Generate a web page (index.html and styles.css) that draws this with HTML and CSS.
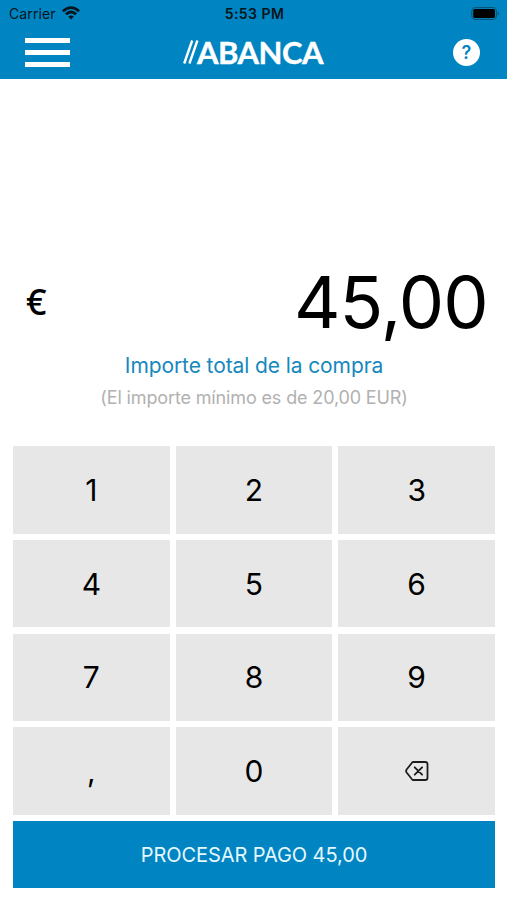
FILE: index.html
```html
<!DOCTYPE html>
<html lang="es">
<head>
<meta charset="utf-8">
<title>ABANCA</title>
<link rel="stylesheet" href="styles.css">
</head>
<body>
<header class="header">
  <div class="status">
    <div class="carrier"><span>Carrier</span>
      <svg class="wifi" width="18" height="14" viewBox="0 0 18 14" fill="none" stroke="#07151d" stroke-width="2.7"><path d="M.9 5.2Q9-2 17.1 5.2M3.9 8.3Q9 3.7 14.1 8.3"/><path d="M6.2 10.6Q9 8.2 11.8 10.6L9 13.5Z" fill="#07151d" stroke="none"/></svg>
    </div>
    <time class="time">5:53 PM</time>
    <svg class="battery" width="30" height="13" viewBox="0 0 30 13"><rect x="1.8" y=".6" width="24.6" height="11.8" rx="3.2" fill="none" stroke="#07506f"/><rect x="3.2" y="2" width="21.8" height="9" rx="1.8"/><path d="M27.8 4.5q2.6 2 0 4z" fill="#07506f"/></svg>
  </div>
  <nav class="nav">
    <button class="menu" aria-label="Menú"><i></i><i></i><i></i></button>
    <div class="brand"><svg width="16" height="24" viewBox="0 0 16 24" stroke="#fff" stroke-width="2.4"><path d="M1.2 23.5 9.2.5M6.4 23.5 14.4.5"/></svg><span>ABANCA</span></div>
    <button class="help">?</button>
  </nav>
</header>
<main class="main">
  <div class="amount"><span class="currency">€</span><span class="value">45,00</span></div>
  <p class="label">Importe total de la compra</p>
  <p class="note">(El importe mínimo es de 20,00 EUR)</p>
  <div class="keys">
    <button>1</button><button>2</button><button>3</button>
    <button>4</button><button>5</button><button>6</button>
    <button>7</button><button>8</button><button>9</button>
    <button>,</button><button>0</button>
    <button aria-label="Borrar"><svg class="erase" width="24" height="20" viewBox="0 0 24 20" fill="none" stroke="#1c1c1c" stroke-width="1.8" stroke-linejoin="round" stroke-linecap="round"><path d="M8.3 1H20.2Q22.5 1 22.5 3.3V16.7Q22.5 19 20.2 19H8.3Q7.6 19 7 18.3L1.6 11.5Q.6 10 1.6 8.5L7 1.7Q7.6 1 8.3 1Z"/><path d="m9.7 6.3 7.4 7.4m0-7.4-7.4 7.4"/></svg></button>
  </div>
  <button class="pay">PROCESAR PAGO 45,00</button>
</main>
</body>
</html>
```
FILE: styles.css
```css
* { box-sizing: border-box; }
body { margin: 0; height: 900px; overflow: hidden; background: #fff; color: #000; font-family: Inter, "Liberation Sans", sans-serif; }
button { margin: 0; padding: 0; border: 0; background: none; color: inherit; font: inherit; }
svg { display: block; }
p { margin: 0; }
.header { height: 79px; background: #0085c2; }
.status { height: 27px; padding: 0 7px 0 9px; display: grid; grid-template-columns: 1fr auto 1fr; align-items: center; font-size: 14px; color: #07151d; }
.carrier { display: flex; align-items: center; gap: 6px; letter-spacing: .1px; }
.wifi { margin-top: -2px; }
.time { font-weight: 600; letter-spacing: .45px; }
.battery { justify-self: end; }
.nav { height: 50px; padding: 0 27px 0 25px; display: grid; grid-template-columns: 1fr auto 1fr; align-items: center; }
.menu { width: 45px; display: flex; flex-direction: column; gap: 7px; }
.menu i { height: 5px; background: #fff; }
.brand { margin: -1px 0 0 1px; display: flex; align-items: center; color: #fff; font: 700 31px/30px Lato, sans-serif; }
.brand span { margin-left: -2px; letter-spacing: -.5px; -webkit-text-stroke: .4px #fff; }
.help { justify-self: end; width: 27px; height: 27px; border-radius: 50%; background: #fff; color: #0085c2; font-size: 18px; font-weight: 600; line-height: 27px; }
.main { padding: 178px 12px 0 13px; display: flex; flex-direction: column; }
.amount { height: 90px; padding: 0 7px 0 13px; display: flex; justify-content: space-between; align-items: center; }
.currency { font: 500 36px/40px "Noto Sans", sans-serif; }
.value { font-size: 72px; line-height: 86px; letter-spacing: -.8px; }
.label { margin-top: 3px; height: 32px; line-height: 32px; text-align: center; font-size: 21px; letter-spacing: -.1px; color: #1688bd; }
.note { height: 32px; line-height: 32px; text-align: center; font-size: 18px; letter-spacing: -.14px; color: #b1b1b1; }
.keys { margin-top: 32px; height: 369px; display: grid; grid-template-columns: repeat(3, 1fr); grid-template-rows: repeat(4, 1fr); gap: 6.3px 6px; }
.keys button { display: flex; justify-content: center; align-items: center; background: #e7e7e7; font-size: 30px; }
.pay { margin-top: 6px; height: 67px; background: #0085c2; color: #e5f8ff; font-size: 20px; letter-spacing: -.08px; }
```
